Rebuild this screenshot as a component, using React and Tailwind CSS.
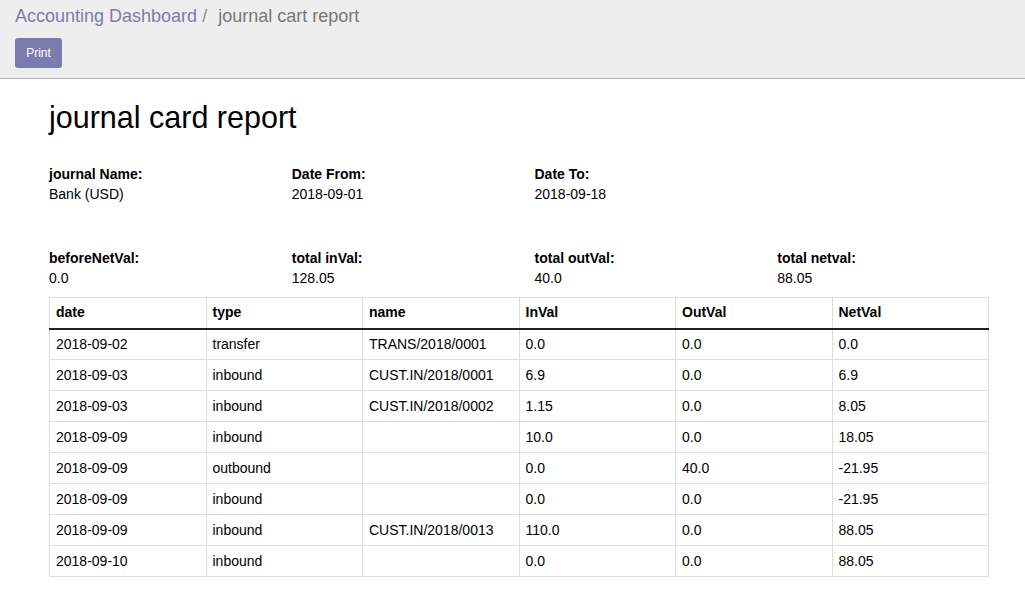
import React from 'react';

const rows = [
  ['2018-09-02', 'transfer', 'TRANS/2018/0001', '0.0', '0.0', '0.0'],
  ['2018-09-03', 'inbound', 'CUST.IN/2018/0001', '6.9', '0.0', '6.9'],
  ['2018-09-03', 'inbound', 'CUST.IN/2018/0002', '1.15', '0.0', '8.05'],
  ['2018-09-09', 'inbound', '', '10.0', '0.0', '18.05'],
  ['2018-09-09', 'outbound', '', '0.0', '40.0', '-21.95'],
  ['2018-09-09', 'inbound', '', '0.0', '0.0', '-21.95'],
  ['2018-09-09', 'inbound', 'CUST.IN/2018/0013', '110.0', '0.0', '88.05'],
  ['2018-09-10', 'inbound', '', '0.0', '0.0', '88.05'],
];

const headers = ['date', 'type', 'name', 'InVal', 'OutVal', 'NetVal'];

const Field = ({ label, value }) => (
  <div className="flex flex-col">
    <span className="font-bold leading-[20px]">{label}</span>
    <span className="leading-[21px]">{value}</span>
  </div>
);

const App = () => {
  return (
    <div className="min-h-[610px] bg-white font-['Liberation_Sans',Arial,sans-serif] text-[14px] text-black">
      <div className="h-[79px] border-b border-[#b5b5b5] bg-[#efeeef] px-[15px] pt-[4px]">
        <div className="text-[18px] leading-[24px]">
          <span className="text-[#7c7bad]">Accounting Dashboard</span>
          <span className="ml-[5px] text-[#8a8a8a]">/</span>
          <span className="ml-[11px] text-[#777777]">journal cart report</span>
        </div>
        <button className="mt-[10px] h-[30px] w-[47px] rounded-[3px] bg-[#7c7bad] text-[12px] text-white">
          Print
        </button>
      </div>

      <div className="ml-[49px] w-[940px]">
        <h1 className="mt-[20px] text-[30.5px] leading-[36px]">journal card report</h1>

        <div className="mt-[29px] grid w-[971px] grid-cols-4">
          <Field label="journal Name:" value="Bank (USD)" />
          <Field label="Date From:" value="2018-09-01" />
          <Field label="Date To:" value="2018-09-18" />
          <div />
        </div>

        <div className="mt-[43px] grid w-[971px] grid-cols-4">
          <Field label="beforeNetVal:" value="0.0" />
          <Field label="total inVal:" value="128.05" />
          <Field label="total outVal:" value="40.0" />
          <Field label="total netval:" value="88.05" />
        </div>

        <table className="mt-[8px] w-full table-fixed border-collapse border border-[#dddddd]">
          <thead>
            <tr>
              {headers.map((h) => (
                <th
                  key={h}
                  className="h-[31px] border border-b-2 border-[#dddddd] border-b-[#222222] px-[6px] text-left font-bold"
                >
                  {h}
                </th>
              ))}
            </tr>
          </thead>
          <tbody>
            {rows.map((r, i) => (
              <tr key={i}>
                {r.map((c, j) => (
                  <td key={j} className="h-[31px] border border-[#dddddd] px-[6px]">
                    {c}
                  </td>
                ))}
              </tr>
            ))}
          </tbody>
        </table>
      </div>
    </div>
  );
};

export default App;
